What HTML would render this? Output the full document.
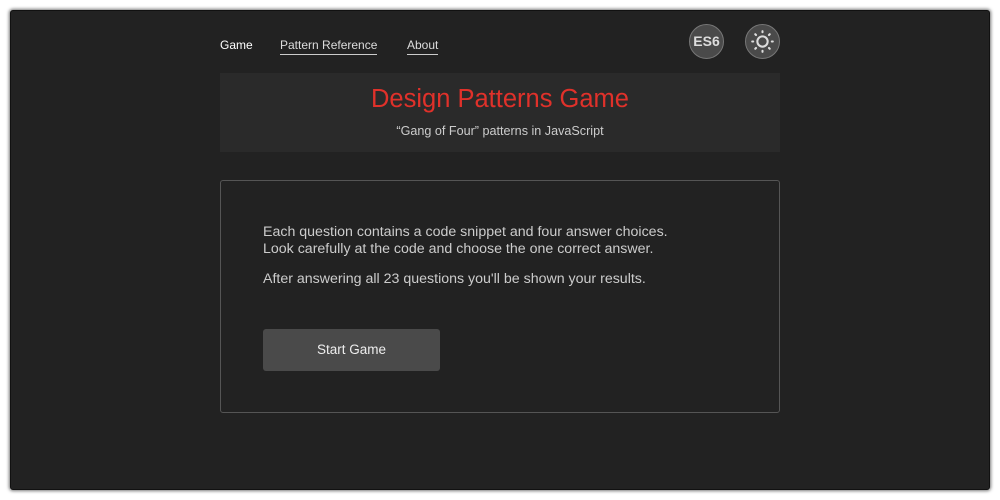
<!DOCTYPE html>
<html><head><style>
html,body{margin:0;width:1000px;height:500px;background:#fff;overflow:hidden;font-family:"Liberation Sans",sans-serif}
.win{position:absolute;left:10px;top:10px;width:980px;height:480px;background:#222;border-radius:3px;box-shadow:0 0 3px 1px #777;border:1px solid #111;box-sizing:border-box}
.a{position:absolute;color:#ddd;font-size:12px}
.u{border-bottom:1px solid #ccc;padding-bottom:2px}
.circ{position:absolute;width:35px;height:35px;border-radius:50%;background:#4a4a4a;border:1px solid #777;box-sizing:border-box;color:#ddd;font-weight:bold;font-size:14px;text-align:center;line-height:33px}
.hdr{position:absolute;left:220px;top:73px;width:560px;height:79px;background:#2a2a2a;text-align:center}
.card{position:absolute;left:220px;top:180px;width:560px;height:233px;border:1px solid #555;border-radius:3px;box-sizing:border-box}
p{margin:0;position:absolute;left:42px;color:#ccc;font-size:14.2px;line-height:16.5px;white-space:nowrap}
.btn{position:absolute;left:42px;top:148px;width:177px;height:42px;background:#4a4a4a;border-radius:3px;color:#eee;font-size:13.5px;text-align:center;line-height:42px}
</style></head><body>
<div class="win"></div>
<div class="a" style="left:220px;top:38px;color:#fff">Game</div>
<div class="a u" style="left:280px;top:38px">Pattern Reference</div>
<div class="a u" style="left:407px;top:38px">About</div>
<div class="circ" style="left:689px;top:24px">ES6</div>
<div class="circ" style="left:745px;top:24px"><svg width="33" height="33" viewBox="0 0 32 32" style="position:absolute;left:0;top:0" stroke="#ddd" stroke-width="2" fill="none" stroke-linecap="round"><circle cx="16" cy="16" r="5"/><path d="M16 6v1M16 25v1M6 16h1M25 16h1M9 9l.7.7M22.3 22.3l.7.7M9 23l.7-.7M22.3 9.7l.7-.7"/></svg></div>
<div class="hdr"><div style="color:#e0312a;font-size:25.5px;margin-top:12px">Design Patterns Game</div><div style="color:#ccc;font-size:12.6px;margin-top:10px">“Gang of Four” patterns in JavaScript</div></div>
<div class="card">
<p style="top:43px">Each question contains a code snippet and four answer choices.<br>Look carefully at the code and choose the one correct answer.</p>
<p style="top:90px">After answering all 23 questions you'll be shown your results.</p>
<div class="btn">Start Game</div>
</div>
</body></html>
